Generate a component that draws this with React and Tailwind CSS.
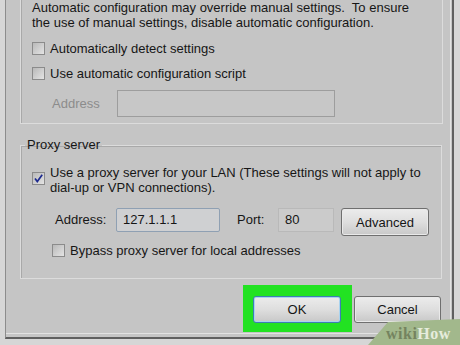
import React from 'react';

const Checkbox = ({ checked = false, className = '' }) => (
  <span
    className={`w-[13px] h-[13px] shrink-0 border border-[#8b8b8b] bg-gradient-to-br from-[#b9b9b9] to-[#e4e4e4] flex items-center justify-center ${className}`}
  >
    {checked && (
      <svg width="11" height="11" viewBox="0 0 11 11">
        <path d="M2 5.5 L4.3 8.6 L9.2 1.8" fill="none" stroke="#1d2a8f" strokeWidth="1.7" />
      </svg>
    )}
  </span>
);

const Button = ({ children, focused = false, className = '' }) => (
  <button
    className={`h-[27px] rounded-[3px] border ${
      focused ? 'border-[#3d7fb3] shadow-[inset_0_0_0_1px_#a9d3ef]' : 'border-[#6f6f6f] shadow-[inset_0_0_0_1px_#e9e9e9]'
    } bg-gradient-to-b from-[#ececec] via-[#dedede] to-[#c8c8c8] text-[13px] text-[#151515] flex items-center justify-center ${className}`}
  >
    {children}
  </button>
);

export default function App() {
  return (
    <div className="w-[460px] h-[345px] overflow-hidden relative bg-[#d6d6d6] font-['Liberation_Sans',Arial,sans-serif] text-[13px] leading-[15px] text-[#161616]">
      {/* Dialog frame */}
      <div className="ml-[5px] w-[449px] h-[339px] bg-[#c5c5c5] border-l border-l-[#8c8c8c] border-r-2 border-r-[#5f5f5f] border-b-2 border-b-[#5f5f5f]">
        <div className="h-[334px] mr-[1px] border-r border-b border-[#e2e2e2] flex flex-col">
          {/* Automatic configuration group */}
          <div className="ml-[14px] w-[423px] -mt-[20px] pt-[19px] pl-[11px] pb-[6px] border border-[#dcdcdc] shadow-[inset_1px_1px_0_#a9a9a9]">
            <p className="whitespace-pre">
              {'Automatic configuration may override manual settings.  To ensure\nthe use of manual settings, disable automatic configuration.'}
            </p>
            <div className="mt-[10px] h-[16px] flex items-center gap-[5px]">
              <Checkbox />
              <span>Automatically detect settings</span>
            </div>
            <div className="mt-[9px] h-[16px] flex items-center gap-[5px]">
              <Checkbox />
              <span>Use automatic configuration script</span>
            </div>
            <div className="mt-[9px] flex items-center">
              <span className="ml-[20px] w-[65px] text-[#8c8c8c]">Address</span>
              <div className="w-[218px] h-[27px] border border-[#9d9d9d] bg-[#c7c7c7]" />
            </div>
          </div>

          {/* Proxy server group */}
          <fieldset className="ml-[14px] mt-[13px] w-[422px] pt-[12px] pb-[20px] border border-[#dcdcdc] shadow-[inset_1px_1px_0_#a9a9a9]">
            <legend className="ml-[4px] px-[2px] leading-[16px]">Proxy server</legend>
            <div className="pl-[11px]">
              <div className="flex items-start gap-[5px]">
                <Checkbox checked className="mt-[7px]" />
                <p>
                  Use a proxy server for your LAN (These settings will not apply to
                  <br />
                  dial-up or VPN connections).
                </p>
              </div>
              <div className="mt-[13px] flex items-start">
                <span className="ml-[23px] w-[61px] leading-[24px]">Address:</span>
                <div className="w-[104px] h-[24px] pl-[6px] border border-[#8fa0b3] rounded-[2px] bg-[#cfd0d2] leading-[22px]">
                  127.1.1.1
                </div>
                <span className="ml-[17px] w-[41px] leading-[24px]">Port:</span>
                <div className="w-[56px] h-[24px] pl-[6px] border border-[#b9b9b9] bg-[#cbcbcb] leading-[22px]">80</div>
                <Button className="ml-[7px] w-[88px] h-[28px]">Advanced</Button>
              </div>
              <div className="mt-[6px] h-[16px] flex items-center gap-[5px]">
                <Checkbox className="ml-[20px]" />
                <span>Bypass proxy server for local addresses</span>
              </div>
            </div>
          </fieldset>

          {/* Buttons */}
          <div className="mt-[6px] flex items-start">
            <div className="ml-[237px] pl-[10px] pt-[11px] pr-[11px] pb-[9px] bg-[#22e222]">
              <Button focused className="w-[88px]">OK</Button>
            </div>
            <Button className="ml-[2px] mt-[11px] w-[87px]">Cancel</Button>
          </div>
        </div>
      </div>

      {/* wikiHow watermark */}
      <div className="absolute right-0 bottom-0 w-[92px] h-[26px]">
        <svg width="92" height="26" viewBox="0 0 92 26" className="absolute inset-0">
          <polygon points="20,3 92,0 92,26 0,26" fill="#a2b88c" />
        </svg>
        <span className="absolute left-[18px] top-[6px] font-['Liberation_Serif',serif] font-bold text-[16px] leading-[18px] tracking-[0.5px]">
          <span className="text-[#74835f]">wiki</span>
          <span className="text-[#e6ecdc]">How</span>
        </span>
      </div>
    </div>
  );
}
